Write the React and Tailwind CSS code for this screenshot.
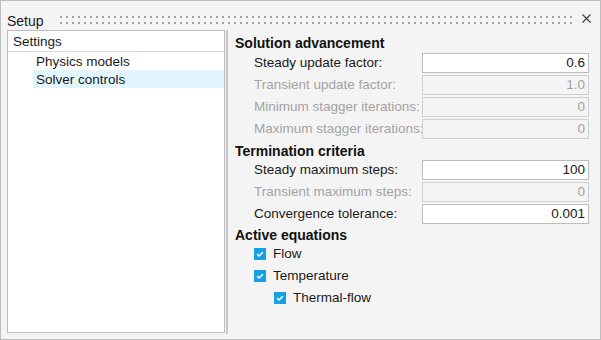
import React from "react";

function Row({ label, value, disabled }) {
  return (
    <div className="flex items-center h-[20px] mb-[2px] pl-[19px]">
      <div className={"flex-1 min-w-0 whitespace-nowrap leading-[16px] " + (disabled ? "text-[#a3a3a3]" : "text-[#1a1a1a]")}>
        {label}
      </div>
      <div
        className={
          "w-[167px] shrink-0 h-[20px] border flex items-center justify-end pr-[3px] leading-[16px] " +
          (disabled
            ? "border-[#cfcfcf] bg-[#f4f4f4] text-[#a3a3a3]"
            : "border-[#bcbcbc] bg-white text-[#1a1a1a]")
        }
      >
        {value}
      </div>
    </div>
  );
}

function Heading({ children, h }) {
  return (
    <div className={"flex items-center font-bold text-[14px] text-[#111] leading-[16px] " + h}>{children}</div>
  );
}

function Check({ label, indent }) {
  return (
    <div className={"flex items-center h-[22px] " + indent}>
      <div className="w-[12px] h-[12px] bg-[#15a1e4] flex items-center justify-center">
        <svg width="12" height="12" viewBox="0 0 12 12">
          <path d="M3.2 6.2 L5.1 8 L8.8 4.2" fill="none" stroke="white" strokeWidth="1.6" />
        </svg>
      </div>
      <span className="ml-[7px] leading-[16px] text-[#1a1a1a]">{label}</span>
    </div>
  );
}

export default function App() {
  return (
    <div className="w-[601px] h-[340px] border border-[#bdbdbd] bg-[#f4f4f4] flex flex-col font-['Liberation_Sans',Arial,sans-serif] text-[13.5px] overflow-hidden">
      {/* title bar */}
      <div className="h-[29px] flex items-start pl-[6px] pr-[9px]">
        <span className="mt-[12px] leading-[16px] text-[14px] text-[#1a1a1a]">Setup</span>
        <svg className="flex-1 mt-[15px] ml-[16px] mr-[8px]" height="8">
          <defs>
            <pattern id="dots" width="6" height="6" patternUnits="userSpaceOnUse">
              <rect x="0" y="0" width="2" height="2" fill="#a2a2a2" />
            </pattern>
          </defs>
          <rect x="0" y="0" width="100%" height="8" fill="url(#dots)" />
        </svg>
        <svg className="mt-[13px]" width="9" height="9" viewBox="0 0 9 9">
          <path d="M0.5 0.5 L8.5 8.5 M8.5 0.5 L0.5 8.5" stroke="#3a3a3a" strokeWidth="1.1" />
        </svg>
      </div>

      {/* body */}
      <div className="flex flex-1 pl-[6px] pr-[11px] pb-[6px]">
        {/* left tree */}
        <div className="w-[218px] shrink-0 border border-[#bdbdbd] bg-white flex flex-col">
          <div className="h-[21px] border-b border-[#d9d9d9] flex items-center pl-[5px] pt-[1px] leading-[16px] text-[#1a1a1a]">
            Settings
          </div>
          <div className="h-[18px] flex items-center ml-[25px] pl-[3px] pt-[1px] leading-[16px] text-[#1a1a1a]">
            Physics models
          </div>
          <div className="h-[18px] flex items-center ml-[25px] pl-[3px] pt-[1px] bg-[#e3f5fc] leading-[16px] text-[#1a1a1a]">
            Solver controls
          </div>
        </div>
        {/* splitter */}
        <div className="w-[2px] shrink-0 ml-[1px] bg-[#c9c9c9] mb-[-1px]"></div>

        {/* right pane */}
        <div className="flex-1 min-w-0 flex flex-col pl-[7px] pt-[3px]">
          <Heading h="h-[20px]">Solution advancement</Heading>
          <Row label="Steady update factor:" value="0.6" />
          <Row label="Transient update factor:" value="1.0" disabled />
          <Row label="Minimum stagger iterations:" value="0" disabled />
          <Row label="Maximum stagger iterations:" value="0" disabled />
          <Heading h="h-[19px]">Termination criteria</Heading>
          <Row label="Steady maximum steps:" value="100" />
          <Row label="Transient maximum steps:" value="0" disabled />
          <Row label="Convergence tolerance:" value="0.001" />
          <Heading h="h-[17px]">Active equations</Heading>
          <Check label="Flow" indent="pl-[19px]" />
          <Check label="Temperature" indent="pl-[19px]" />
          <Check label="Thermal-flow" indent="pl-[39px]" />
        </div>
      </div>
    </div>
  );
}
